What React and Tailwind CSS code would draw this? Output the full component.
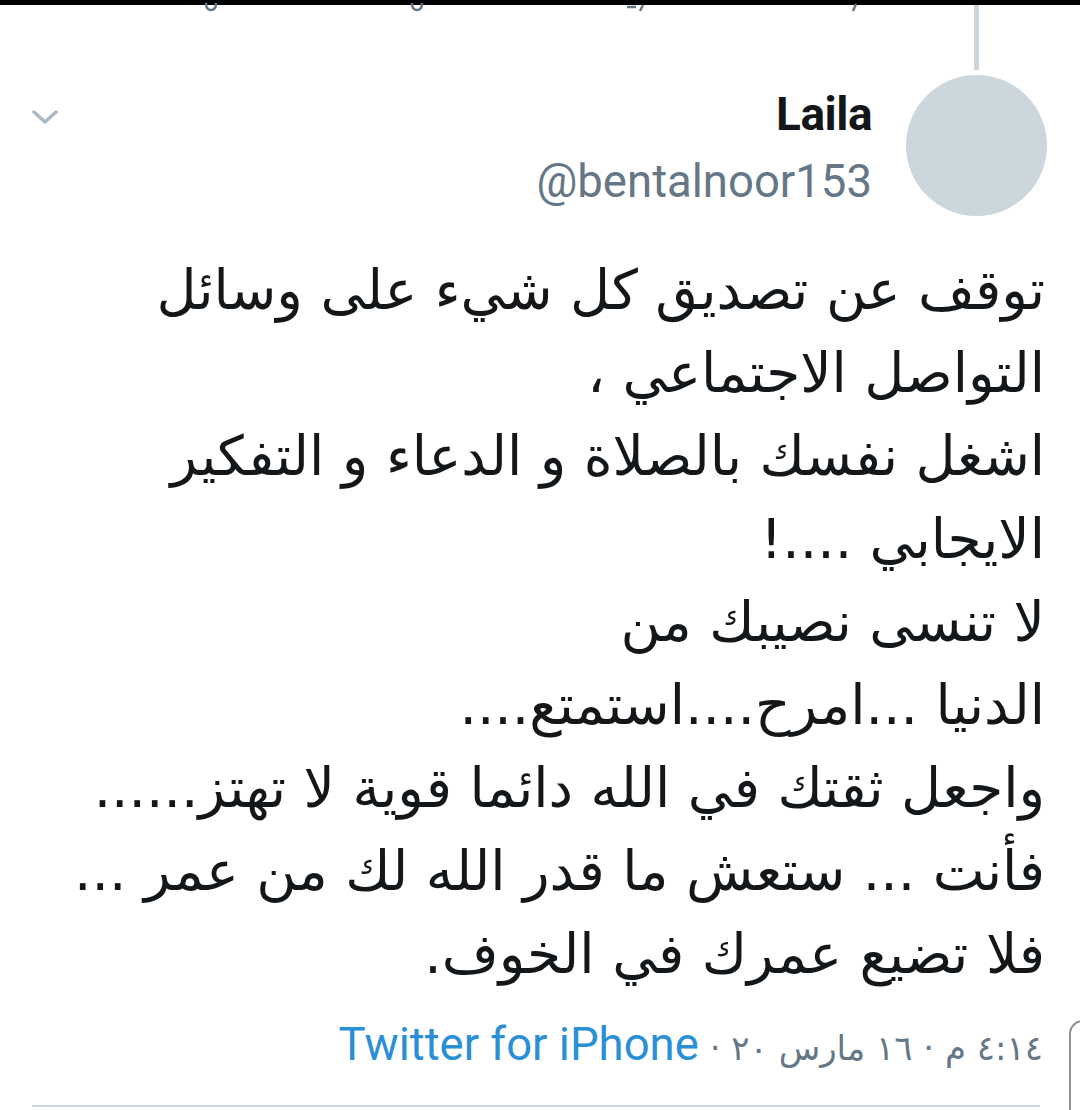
import React from "react";

const lines = [
  "توقف عن تصديق كل شيء على وسائل",
  "التواصل الاجتماعي ،",
  "اشغل نفسك بالصلاة و الدعاء و التفكير",
  "الايجابي ....!",
  "لا تنسى نصيبك من",
  "الدنيا ...امرح....استمتع....",
  "واجعل ثقتك في الله دائما قوية لا تهتز......",
  "فأنت ... ستعش ما قدر الله لك من عمر ...",
  "فلا تضيع عمرك في الخوف.",
];

export default function App() {
  return (
    <div className="relative w-[1080px] h-[1110px] bg-white overflow-hidden">
      <div className="h-[5px] bg-black" />
      {/* clipped action icons of previous tweet */}
      <svg className="absolute left-[204px] top-[3px]" width="14" height="10" viewBox="0 0 14 10">
        <path d="M2 0 Q2 7 7 7 Q12 7 12 0" fill="none" stroke="#657786" strokeWidth="2.5" />
      </svg>
      <svg className="absolute left-[410px] top-[3px]" width="14" height="10" viewBox="0 0 14 10">
        <path d="M2 0 Q2 7 7 7 Q12 7 12 0" fill="none" stroke="#657786" strokeWidth="2.5" />
      </svg>
      <svg className="absolute left-[626px] top-[3px]" width="20" height="10" viewBox="0 0 20 10">
        <path d="M1 4 H10 M14 8 L17 2" fill="none" stroke="#657786" strokeWidth="2.5" />
      </svg>
      <svg className="absolute left-[850px] top-[3px]" width="10" height="10" viewBox="0 0 10 10">
        <path d="M3 8 L6 1" fill="none" stroke="#657786" strokeWidth="2.5" />
      </svg>

      {/* header */}
      <div className="flex items-start">
        <div className="pl-[32px] pt-[104px] flex-1">
          <svg width="26" height="16" viewBox="0 0 26 16">
            <path d="M2 3 L13 13 L24 3" fill="none" stroke="#aab8c2" strokeWidth="3.5" strokeLinecap="round" strokeLinejoin="round" />
          </svg>
        </div>
        <div className="flex flex-col items-end pt-[86px] pr-[34px]" style={{ fontFamily: "Roboto, 'Liberation Sans', sans-serif" }}>
          <div className="text-[46px] leading-[46px] font-bold text-[#14171a] tracking-[-0.5px]">Laila</div>
          <div className="mt-[22px] text-[45.5px] leading-[45px] text-[#657786]">@bentalnoor153</div>
        </div>
        <div className="flex flex-col items-center w-[141px] mr-[33px]">
          <div className="w-[5px] h-[65px] bg-[#ccd6dd]" />
          <div className="mt-[5px] w-[141px] h-[141px] rounded-full bg-[#ccd6dd]" />
        </div>
      </div>

      {/* tweet body */}
      <div
        dir="rtl"
        className="mt-[33px] pr-[35px] text-[#14171a] text-[55px] leading-[83px]"
        style={{ fontFamily: "'DejaVu Sans', sans-serif" }}
      >
        {lines.map((l, i) => (
          <div key={i} className="whitespace-nowrap">{l}</div>
        ))}
      </div>

      {/* footer */}
      <div
        dir="rtl"
        className="mt-[24px] pr-[37px] text-[34px] leading-[50px] text-[#657786] whitespace-nowrap"
        style={{ fontFamily: "'DejaVu Sans', sans-serif" }}
      >
        ٤:١٤ م · ١٦ مارس ٢٠ ·{" "}
        <span className="text-[#2b8fd6] text-[45.5px]" style={{ fontFamily: "Roboto, sans-serif" }}>
          Twitter for iPhone
        </span>
      </div>

      <div className="absolute left-[32px] right-[40px] top-[1105px] h-[2px] bg-[#ccd6dd]" />
      <div className="absolute left-[1069px] top-[1020px] w-[30px] h-[120px] border-l-2 border-t-2 border-[#8f8f8f] rounded-tl-[14px]" />
    </div>
  );
}
